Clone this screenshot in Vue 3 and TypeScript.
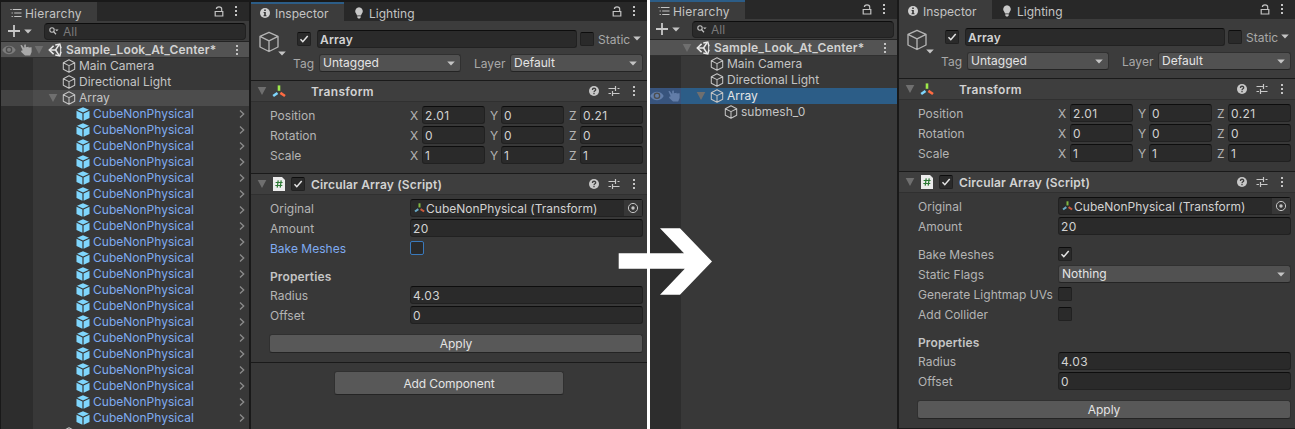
<script setup lang="ts">
interface TreeRow {
  name: string
  depth: number
  icon: 'cube' | 'prefab'
  open?: boolean
  state?: 'hover' | 'selected'
}

interface Editor {
  id: string
  focus: 'hierarchy' | 'inspector'
  baked: boolean
  sceneHover: boolean
  rows: TreeRow[]
}

const cubes: TreeRow[] = Array.from({ length: 20 }, () => ({
  name: 'CubeNonPhysical',
  depth: 2,
  icon: 'prefab',
}))

const editors: Editor[] = [
  {
    id: 'before',
    focus: 'inspector',
    baked: false,
    sceneHover: true,
    rows: [
      { name: 'Main Camera', depth: 1, icon: 'cube' },
      { name: 'Directional Light', depth: 1, icon: 'cube' },
      { name: 'Array', depth: 1, icon: 'cube', open: true, state: 'hover' },
      ...cubes,
      { name: '', depth: 1, icon: 'cube' },
    ],
  },
  {
    id: 'after',
    focus: 'hierarchy',
    baked: true,
    sceneHover: false,
    rows: [
      { name: 'Main Camera', depth: 1, icon: 'cube' },
      { name: 'Directional Light', depth: 1, icon: 'cube' },
      { name: 'Array', depth: 1, icon: 'cube', open: true, state: 'selected' },
      { name: 'submesh_0', depth: 2, icon: 'cube' },
    ],
  },
]

const vectors = [
  { label: 'Position', x: '2.01', y: '0', z: '0.21' },
  { label: 'Rotation', x: '0', y: '0', z: '0' },
  { label: 'Scale', x: '1', y: '1', z: '1' },
]
</script>

<template>
  <svg class="defs" width="0" height="0">
    <symbol id="i-cube" viewBox="0 0 14 14">
      <path d="M7 .8 12.7 3.7V10.3L7 13.3 1.3 10.3V3.7ZM1.3 3.7 7 6.6 12.7 3.7M7 6.6V13.3" fill="none" stroke="#c4c4c4" stroke-width="1.05" stroke-linejoin="round" />
    </symbol>
    <symbol id="i-prefab" viewBox="0 0 14 14">
      <path d="M7 .2 13 2.8 7 5.6 1 2.8ZM.5 3.8 6.4 6.6V13.8L.5 11.1ZM13.5 3.8 7.6 6.6V13.8L13.5 11.1Z" fill="#7fd6fd" />
    </symbol>
    <symbol id="i-bigcube" viewBox="0 0 20 22">
      <path d="M10 1.3 19 5.3V16L10 20.5 1 16V5.3ZM1 5.3 10 9.8 19 5.3M10 9.8V20.5" fill="none" stroke="#b4b4b4" stroke-width="1.35" stroke-linejoin="round" />
    </symbol>
    <symbol id="i-fold" viewBox="0 0 10 10">
      <path d="M.7 1H9.3L5 9Z" fill="#6f6f6f" />
    </symbol>
    <symbol id="i-drop" viewBox="0 0 8 5">
      <path d="M.2.4H7.8L4 4.6Z" fill="#c4c4c4" />
    </symbol>
    <symbol id="i-list" viewBox="0 0 12 10">
      <path d="M2.8 1.5H11.5M4.2 5H11.5M4.2 8.5H11.5" stroke="#c4c4c4" stroke-width="1.1" />
      <path d="M.4 1.5H1.6M1.6 5H2.8M1.6 8.5H2.8" stroke="#c4c4c4" stroke-width="1.2" />
    </symbol>
    <symbol id="i-lock" viewBox="0 0 10 11">
      <path d="M1.2 5.5H8.8V10H1.2Z" fill="none" stroke="#c4c4c4" stroke-width="1.2" />
      <path d="M2.4 2.9C2.4 1.3 3.5.8 5 .8S7.7 1.4 7.7 2.9V5.5" fill="none" stroke="#c4c4c4" stroke-width="1.2" />
    </symbol>
    <symbol id="i-dots" viewBox="0 0 4 12">
      <path d="M1 1H3V3H1ZM1 5H3V7H1ZM1 9H3V11H1Z" fill="#c4c4c4" />
    </symbol>
    <symbol id="i-search" viewBox="0 0 10 8">
      <circle cx="3" cy="3" r="2.2" fill="none" stroke="#c4c4c4" stroke-width="1.1" />
      <path d="M4.6 4.6 7 7.2" stroke="#c4c4c4" stroke-width="1.3" />
      <path d="M6 2.4H9.6L7.8 4.2Z" fill="#c4c4c4" />
    </symbol>
    <symbol id="i-eye" viewBox="0 0 14 10">
      <path d="M.3 5C2 2 4.400 .7 7 .7S12 2 13.7 5C12 8 9.600 9.300 7 9.300S2 8 .3 5Z" fill="currentColor" />
      <circle cx="7" cy="4.800" r="3.300" class="eye-ring" />
      <circle cx="7" cy="4.800" r="2" fill="currentColor" />
    </symbol>
    <symbol id="i-hand" viewBox="0 0 12 12">
      <path d="M.4 1.200 1.800 .9 4.200 4.200V.8L5.900 .6V3.300L8.600 2.800V3.600L11.600 3.200V8L10.200 11.500H5L1 7.700 1.800 6.300 2.800 6.500Z" fill="currentColor" />
    </symbol>
    <symbol id="i-unity" viewBox="0 0 14 14">
      <path d="M5.600 2.900 1.300 7 5.600 11.100M7.300 2 11.800 1.100 13 5.200M7.300 12 11.800 12.900 13 8.800" fill="none" stroke="#e8e8e8" stroke-width="1.500" />
      <path d="M1.600 7H7.600L10.900 1.800M7.600 7 10.900 12.200" fill="none" stroke="#e8e8e8" stroke-width="1.500" />
      <path d="M12.700 4.500V9.500" stroke="#e8e8e8" stroke-width="1" />
    </symbol>
    <symbol id="i-info" viewBox="0 0 10 10">
      <circle cx="5" cy="5" r="5" fill="#d0d0d0" />
      <path d="M4.200 1.600H5.800V3.100H4.200ZM3.600 4.100H5.800V7.300H6.500V8.300H3.500V7.300H4.200V5H3.600Z" fill="#333" />
    </symbol>
    <symbol id="i-bulb" viewBox="0 0 10 12">
      <path d="M5 .3A4 4 0 0 1 7.500 7.300L7 8.500H3L2.500 7.300A4 4 0 0 1 5 .3ZM3.300 9.200H6.700V10.500L5.800 11.500H4.200L3.300 10.500Z" fill="#c8c8c8" />
    </symbol>
    <symbol id="i-help" viewBox="0 0 10 10">
      <circle cx="5" cy="5" r="5" fill="#c8c8c8" />
      <path d="M3.400 3.900C3.400 1.700 6.700 1.800 6.700 3.700 6.700 4.900 5 4.800 5 6.200M5 7V8.200" fill="none" stroke="#3e3e3e" stroke-width="1.300" />
    </symbol>
    <symbol id="i-preset" viewBox="0 0 12 12">
      <path d="M.5 3.500H8M9.500 3.500H11.500M.5 8.500H3M4.500 8.500H11.500" stroke="#c8c8c8" stroke-width="1.200" />
      <path d="M7.500 1V6M4.500 6V11" stroke="#c8c8c8" stroke-width="1.200" />
    </symbol>
    <symbol id="i-axes" viewBox="0 0 14 13">
      <path d="M7 .4V5.800" stroke="#9ee84a" stroke-width="2.600" />
      <path d="M5.500 8 1.200 11" stroke="#7fd6fd" stroke-width="2.600" />
      <path d="M8.400 7.900 13 11" stroke="#ff6b42" stroke-width="2.600" />
    </symbol>
    <symbol id="i-script" viewBox="0 0 12 14">
      <path d="M0 0H9L12 3V14H0Z" fill="#ececec" />
      <path d="M5.200 3.300 4.200 10.700M8.200 3.300 7.200 10.700M2.600 5.500H9.600M2.300 8.500H9.300" stroke="#2d7a35" stroke-width="1.200" />
    </symbol>
    <symbol id="i-check" viewBox="0 0 12 12">
      <path d="M2.500 6.300 4.800 8.700 9.700 3" fill="none" stroke="#e4e4e4" stroke-width="1.500" />
    </symbol>
    <symbol id="i-target" viewBox="0 0 12 12">
      <circle cx="6" cy="6" r="4.600" fill="none" stroke="#c4c4c4" stroke-width="1" />
      <circle cx="6" cy="6" r="1.700" fill="#c4c4c4" />
    </symbol>
    <symbol id="i-chev" viewBox="0 0 6 8">
      <path d="M1 .6 4.700 4 1 7.400" fill="none" stroke="#8c8c8c" stroke-width="1.300" />
    </symbol>
  </svg>

  <main class="stage">
    <section v-for="ed in editors" :key="ed.id" class="shot" :class="ed.id">
      <div class="window">
        <div class="panel hierarchy">
          <div class="tabs">
            <div class="tab t-hier" :class="{ focus: ed.focus === 'hierarchy' }">
              <svg class="ic-list"><use href="#i-list" /></svg><span>Hierarchy</span>
            </div>
            <div class="tab-tools"><svg class="ic-lock"><use href="#i-lock" /></svg><svg class="ic-dots"><use href="#i-dots" /></svg></div>
          </div>
          <div class="toolbar">
            <svg class="ic-plus" viewBox="0 0 12 12"><path d="M6 0V12M0 6H12" stroke="#c8c8c8" stroke-width="1.800" /></svg>
            <svg class="ic-drop"><use href="#i-drop" /></svg>
            <div class="search"><svg class="ic-search"><use href="#i-search" /></svg><span>All</span></div>
          </div>
          <div class="row scene">
            <div class="gutter">
              <template v-if="ed.sceneHover">
                <svg class="ic-eye"><use href="#i-eye" /></svg><svg class="ic-hand"><use href="#i-hand" /></svg>
              </template>
            </div>
            <svg class="ic-fold"><use href="#i-fold" /></svg>
            <svg class="ic-unity"><use href="#i-unity" /></svg>
            <span class="label">Sample_Look_At_Center*</span>
            <svg class="ic-dots"><use href="#i-dots" /></svg>
          </div>
          <div class="tree">
            <div v-for="(row, i) in ed.rows" :key="i" class="row" :class="[row.state, `d${row.depth}`, row.icon]">
              <div class="gutter">
                <template v-if="row.state === 'selected'">
                  <svg class="ic-eye"><use href="#i-eye" /></svg><svg class="ic-hand"><use href="#i-hand" /></svg>
                </template>
              </div>
              <span class="twist"><svg v-if="row.open" class="ic-fold"><use href="#i-fold" /></svg></span>
              <svg class="ic-node"><use :href="`#i-${row.icon}`" /></svg>
              <span class="label">{{ row.name }}</span>
              <svg v-if="row.icon === 'prefab'" class="ic-chev"><use href="#i-chev" /></svg>
            </div>
            <div class="rest"><div class="gutter"></div></div>
          </div>
        </div>

        <div class="panel inspector">
          <div class="tabs">
            <div class="tab t-insp" :class="{ focus: ed.focus === 'inspector' }">
              <svg class="ic-info"><use href="#i-info" /></svg><span>Inspector</span>
            </div>
            <div class="tab off"><svg class="ic-bulb"><use href="#i-bulb" /></svg><span>Lighting</span></div>
            <div class="tab-tools"><svg class="ic-lock"><use href="#i-lock" /></svg><svg class="ic-dots"><use href="#i-dots" /></svg></div>
          </div>

          <div class="head">
            <div class="bigicon"><svg class="ic-big"><use href="#i-bigcube" /></svg><svg class="ic-drop"><use href="#i-drop" /></svg></div>
            <div class="headrows">
              <div class="hrow first">
                <div class="check"><svg><use href="#i-check" /></svg></div>
                <div class="field name">Array</div>
                <div class="check"></div>
                <span class="static">Static</span>
                <svg class="ic-drop"><use href="#i-drop" /></svg>
              </div>
              <div class="hrow second">
                <span class="tag">Tag</span>
                <div class="select tagsel"><span>Untagged</span><svg class="ic-drop"><use href="#i-drop" /></svg></div>
                <span class="layer">Layer</span>
                <div class="select layersel"><span>Default</span><svg class="ic-drop"><use href="#i-drop" /></svg></div>
              </div>
            </div>
          </div>

          <div class="comp">
            <svg class="ic-fold"><use href="#i-fold" /></svg>
            <svg class="ic-axes"><use href="#i-axes" /></svg>
            <span class="title wide">Transform</span>
            <svg class="ic-help"><use href="#i-help" /></svg>
            <svg class="ic-preset"><use href="#i-preset" /></svg>
            <svg class="ic-dots"><use href="#i-dots" /></svg>
          </div>
          <div class="body transform">
            <div v-for="v in vectors" :key="v.label" class="prop">
              <span class="plabel">{{ v.label }}</span>
              <div class="vec">
                <span>X</span><div class="field num">{{ v.x }}</div>
                <span>Y</span><div class="field num">{{ v.y }}</div>
                <span>Z</span><div class="field num">{{ v.z }}</div>
              </div>
            </div>
          </div>

          <div class="comp">
            <svg class="ic-fold"><use href="#i-fold" /></svg>
            <svg class="ic-script"><use href="#i-script" /></svg>
            <div class="check"><svg><use href="#i-check" /></svg></div>
            <span class="title">Circular Array (Script)</span>
            <svg class="ic-help"><use href="#i-help" /></svg>
            <svg class="ic-preset"><use href="#i-preset" /></svg>
            <svg class="ic-dots"><use href="#i-dots" /></svg>
          </div>
          <div class="body script">
            <div class="prop">
              <span class="plabel">Original</span>
              <div class="field object">
                <svg class="ic-axes-s"><use href="#i-axes" /></svg><span>CubeNonPhysical (Transform)</span>
                <div class="pick"><svg><use href="#i-target" /></svg></div>
              </div>
            </div>
            <div class="prop"><span class="plabel">Amount</span><div class="field num">20</div></div>
            <div v-if="!ed.baked" class="prop"><span class="plabel blue">Bake Meshes</span><div class="check blue"></div></div>
            <template v-else>
              <div class="prop spaced"><span class="plabel">Bake Meshes</span><div class="check"><svg><use href="#i-check" /></svg></div></div>
              <div class="prop"><span class="plabel">Static Flags</span><div class="select grow"><span>Nothing</span><svg class="ic-drop"><use href="#i-drop" /></svg></div></div>
              <div class="prop"><span class="plabel">Generate Lightmap UVs</span><div class="check"></div></div>
              <div class="prop"><span class="plabel">Add Collider</span><div class="check"></div></div>
            </template>
            <div class="section">Properties</div>
            <div class="prop"><span class="plabel">Radius</span><div class="field num">4.03</div></div>
            <div class="prop"><span class="plabel">Offset</span><div class="field num">0</div></div>
            <div class="button apply">Apply</div>
          </div>
          <div v-if="!ed.baked" class="footer"><div class="button add">Add Component</div></div>
        </div>
      </div>
    </section>
    <svg class="arrow" viewBox="0 0 94 67"><path d="M.7 25.300H66L42 .3H62L94 33.500 62 66.700H42L66.800 40.700H.7Z" fill="#fff" /></svg>
  </main>
</template>

<style>
body { background: #fff; overflow: hidden; }
</style>

<style scoped>
* { box-sizing: border-box; }
.defs { position: absolute; }
svg { flex: none; display: block; }
.stage {
  position: relative; display: flex; gap: 3px; width: 1295px; height: 429px; overflow: hidden; background: #fff;
  font-family: Inter, "Liberation Sans", sans-serif; font-size: 12px; letter-spacing: 0.01px; color: #c4c4c4; white-space: nowrap;
}
.shot { height: 429px; overflow: hidden; background: #191919; }
.before { width: 647px; }
.after { width: 645px; }
.window { display: flex; gap: 2px; width: 647px; height: 431px; padding: 2px 0 0 1px; background: #191919; }
.after .window { margin: -2px 0 0 -2px; }
.panel { display: flex; flex-direction: column; height: 429px; background: #383838; overflow: hidden; }
.hierarchy { width: 248px; }
.inspector { width: 396px; }

.tabs { display: flex; height: 19px; flex: none; background: #282828; }
.tab { display: flex; align-items: center; height: 19px; background: #3c3c3c; border-top: 2px solid #3c3c3c; line-height: 17px; }
.tab span { position: relative; top: 1px; }
.tab.focus { border-top-color: #2c5d87; }
.tab.off { background: none; border-color: transparent; }
.t-hier { width: 96px; padding-left: 9px; gap: 3px; letter-spacing: 0.2px; }
.t-insp { width: 93px; padding-left: 9px; gap: 5px; }
.off { padding-left: 10px; gap: 5px; }
.tab-tools { display: flex; align-items: center; gap: 10px; margin-left: auto; padding-right: 11px; height: 18px; }
.ic-list { width: 12px; height: 10px; }
.ic-lock { width: 10px; height: 11px; }
.ic-dots { width: 4px; height: 12px; }
.ic-info { width: 10px; height: 10px; }
.ic-bulb { width: 10px; height: 12px; }
.ic-drop { width: 8px; height: 5px; }
.ic-fold { width: 10px; height: 10px; }

.toolbar { display: flex; align-items: center; flex: none; height: 21px; background: #3c3c3c; border-bottom: 1px solid #232323; padding: 0 3px 0 7px; }
.ic-plus { width: 12px; height: 12px; }
.toolbar .ic-drop { margin: 0 12px 0 4px; }
.search { display: flex; align-items: center; gap: 4px; flex: 1; height: 17px; border: 1px solid #212121; border-top-color: #0d0d0d; border-radius: 4px; background: #2a2a2a; padding-left: 4px; color: #7a7a7a; }
.ic-search { width: 10px; height: 8px; }

.row { display: flex; align-items: center; height: 16px; flex: none; line-height: 16px; }
.gutter { display: flex; align-items: center; gap: 4px; width: 32px; height: 100%; flex: none; background: #2d2d2d; padding-left: 1px; color: #7c7c7c; }
.scene { height: 16px; background: #535353; border-bottom: 1px solid #303030; font-weight: 600; letter-spacing: 0.17px; color: #d2d2d2; }
.scene .gutter { background: none; }
.scene .ic-hand { color: #a8a8a8; }
.scene .ic-fold { margin-left: 1px; }
.scene .ic-unity { margin: 0 4px 0 4px; }
.scene .ic-dots { margin-left: auto; margin-right: 10px; }
.ic-unity { width: 14px; height: 14px; }
.ic-eye { width: 14px; height: 10px; }
.ic-hand { width: 12px; height: 12px; }
.eye-ring { fill: #4c4c4c; }
.tree { display: flex; flex-direction: column; flex: 1; min-height: 0; }
.twist { display: flex; justify-content: flex-end; width: 25px; flex: none; }
.ic-node { width: 14px; height: 14px; margin: 0 3px 0 3px; }
.d1 .twist { margin-right: 1px; }
.d2 .twist { width: 40px; }
.hover { background: #4c4c4c; }
.hover .gutter { background: #434343; }
.selected { background: #2c5d87; color: #e4e4e4; }
.selected .gutter { background: #38547d; color: #627da8; }
.prefab .label { color: #7fabf0; }
.ic-chev { width: 6px; height: 8px; margin-left: auto; margin-right: 4px; }
.rest { flex: 1; min-height: 0; }

.head { display: flex; flex: none; height: 60px; background: #3c3c3c; border-bottom: 1px solid #1a1a1a; padding: 9px 4px 0 8px; }
.bigicon { width: 34px; }
.ic-big { width: 20px; height: 22px; margin-top: 1px; }
.bigicon .ic-drop { margin: -2px 0 0 19px; }
.headrows { flex: 1; }
.hrow { display: flex; align-items: center; height: 18px; }
.first { padding-left: 4px; }
.second { margin-top: 6px; }
.name { margin: 0 3px 0 6px; font-weight: 600; letter-spacing: 0.2px; }
.static { width: 32px; margin: 0 3px 0 4px; color: #a8a8a8; }
.first .ic-drop { margin-top: -1px; margin-right: 2px; }
.tag { width: 26px; color: #a8a8a8; }
.layer { width: 36px; margin-left: 13px; color: #a8a8a8; }
.tagsel { width: 142px; }
.layersel { flex: 1; }

.check { width: 14px; height: 14px; flex: none; background: #2a2a2a; border: 1px solid #212121; border-top-color: #0d0d0d; border-radius: 2px; }
.check svg { width: 12px; height: 12px; }
.check.blue { border-color: #3a79bb; }
.field { flex: 1; min-width: 0; height: 18px; padding-left: 2px; background: #2a2a2a; border: 1px solid #212121; border-top-color: #0d0d0d; border-radius: 3px; line-height: 17px; color: #d2d2d2; }
.num { letter-spacing: 0.4px; }
.select { display: flex; align-items: center; justify-content: space-between; height: 18px; padding: 0 5px 0 3px; background: #515151; border: 1px solid #303030; border-bottom-color: #242424; border-radius: 3px; line-height: 16px; color: #e4e4e4; }
.grow { flex: 1; }

.comp { display: flex; align-items: center; flex: none; height: 21px; background: #3e3e3e; border-bottom: 1px solid #303030; padding: 0 11px 0 6px; }
.ic-axes { width: 14px; height: 13px; margin: 0 25px 0 5px; }
.ic-script { width: 12px; height: 14px; margin: 0 6px 0 6px; }
.comp .check { margin-right: 6px; }
.title { font-weight: 600; letter-spacing: 0.17px; margin-right: auto; color: #d2d2d2; }
.wide { letter-spacing: 0.32px; }
.ic-help { width: 10px; height: 10px; }
.ic-preset { width: 12px; height: 12px; margin: 0 12px 0 9px; }

.body { display: flex; flex-direction: column; gap: 2px; flex: none; padding: 4px 4px 0 19px; }
.transform { height: 72px; border-bottom: 1px solid #1a1a1a; }
.prop { display: flex; align-items: center; height: 18px; flex: none; }
.plabel { width: 140px; flex: none; line-height: 18px; color: #b4b4b4; padding-top: 1px; }
.vec { display: grid; grid-template-columns: 12px 63px 16px 63px 16px 63px; flex: 1; align-items: center; color: #b4b4b4; }
.vec span:nth-of-type(n + 2) { padding-left: 5px; }
.script { padding-bottom: 9px; border-bottom: 1px solid #1a1a1a; }
.object { display: flex; align-items: center; padding-left: 3px; }
.ic-axes-s { width: 11px; height: 10px; margin-right: 1px; opacity: 0.75; }
.pick { display: flex; align-items: center; justify-content: center; width: 18px; height: 16px; margin-left: auto; background: #373737; }
.pick svg { width: 12px; height: 12px; }
.spaced { margin-top: 8px; }
.plabel.blue { color: #7fabf0; }
.section { height: 15px; margin-top: 10px; line-height: 16px; font-weight: 600; letter-spacing: 0.12px; }
.button { display: flex; align-items: center; justify-content: center; background: #585858; border: 1px solid #303030; border-bottom-color: #242424; border-radius: 3px; color: #e4e4e4; }
.apply { height: 19px; margin: 8px 0 0 -1px; }
.footer { display: flex; justify-content: center; padding: 8px 0 0 0; }
.add { width: 230px; height: 24px; letter-spacing: -0.1px; }
.arrow { position: absolute; left: 618px; top: 228px; width: 94px; height: 67px; }
</style>
